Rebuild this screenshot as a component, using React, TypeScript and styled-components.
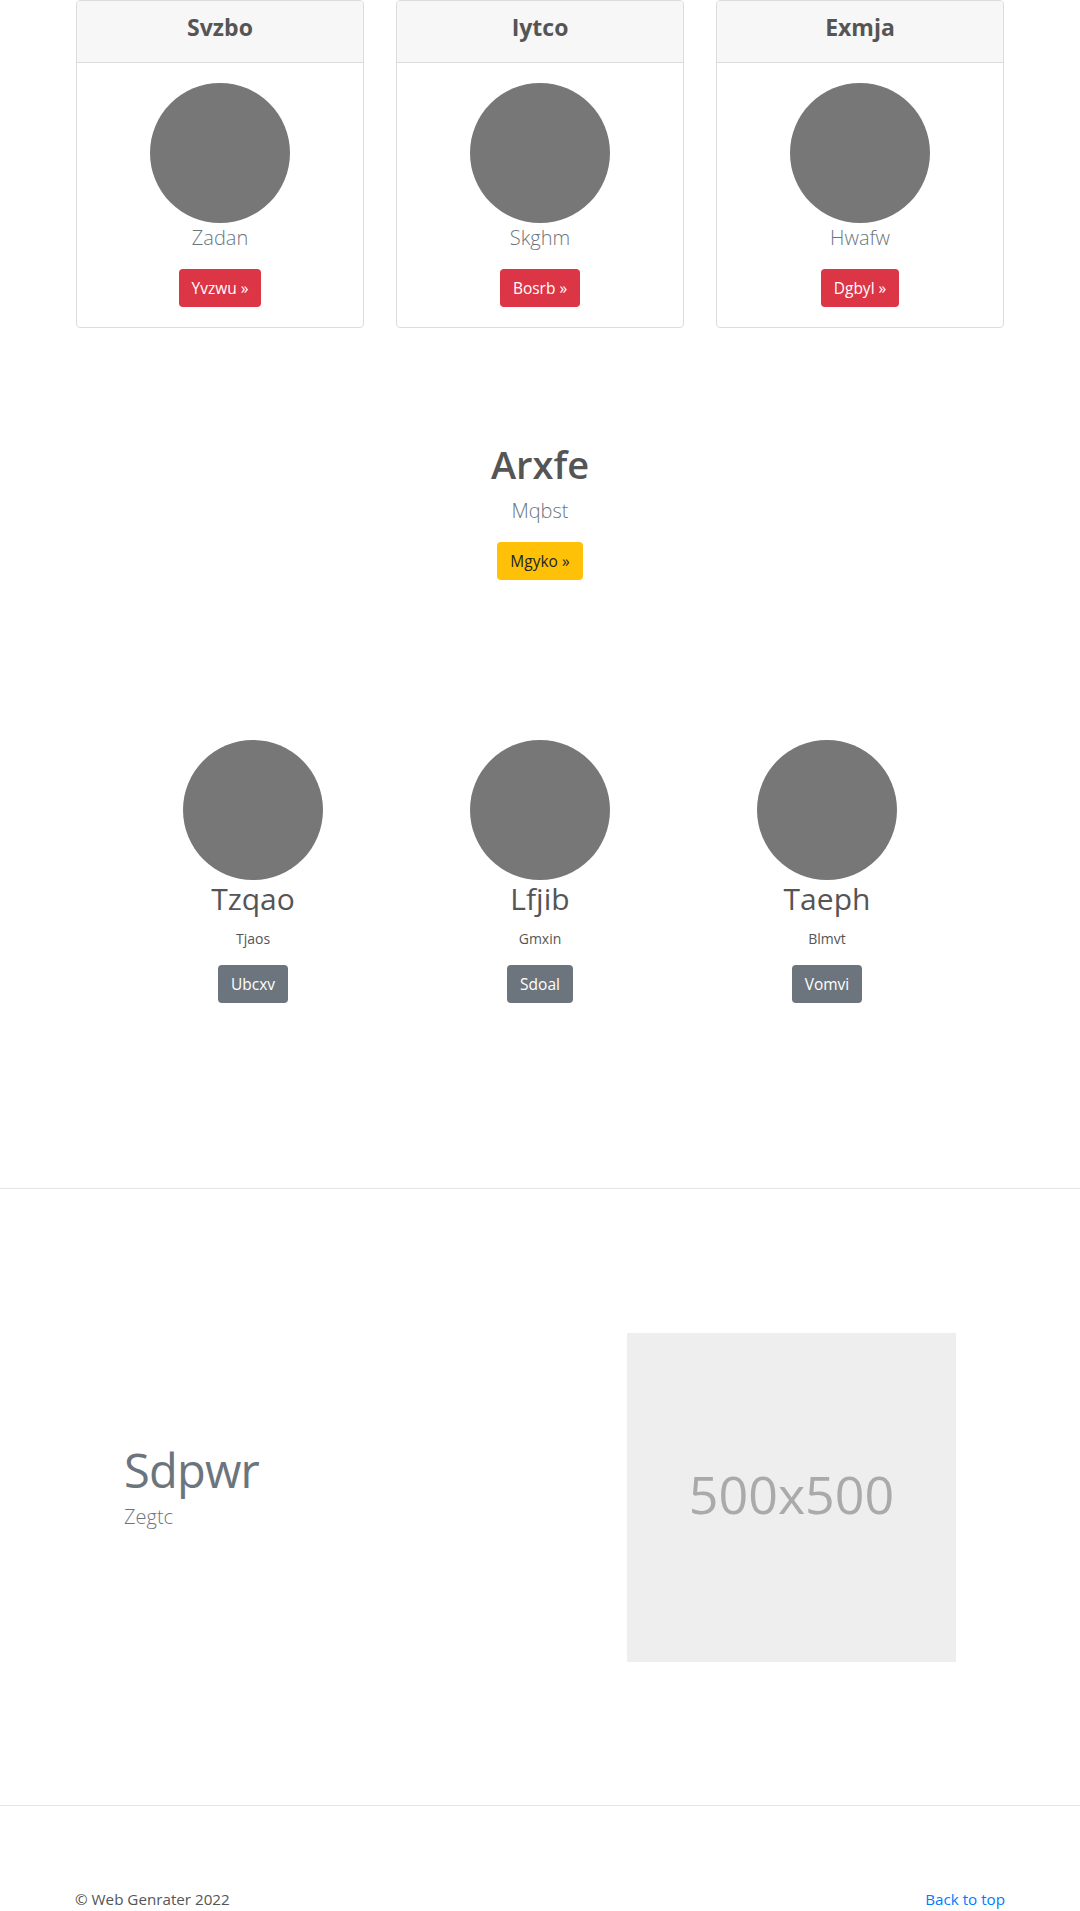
import React from 'react';
import styled, { createGlobalStyle } from 'styled-components';

const GlobalStyle = createGlobalStyle`
    * {
        box-sizing: border-box;
    }

    body {
        margin: 0;
        background: #fff;
        color: #555;
        font-family: 'Segoe UI', 'Open Sans', sans-serif;
        font-size: 16px;
        line-height: 1.5;
    }
`;

const CardRow = styled.div`
    width: 960px;
    margin: 0 auto;
    padding: 0 16px;
    display: grid;
    grid-template-columns: repeat(3, 1fr);
    gap: 32px;
`;

const Card = styled.div`
    border: 1px solid #dcdcdc;
    border-radius: 4px;
    display: flex;
    flex-direction: column;
    text-align: center;
    overflow: hidden;
`;

const CardHeader = styled.div`
    background: #f7f7f7;
    border-bottom: 1px solid #dcdcdc;
    padding: 12px 20px 20px;
    height: 62px;
`;

const CardTitle = styled.h4`
    margin: 0;
    font-size: 23px;
    line-height: 29px;
    font-weight: 700;
    color: #555;
`;

const CardBody = styled.div`
    padding: 20px;
    display: flex;
    flex-direction: column;
    align-items: center;
`;

const Circle = styled.div`
    width: 140px;
    height: 140px;
    border-radius: 50%;
    background: #777;
    flex-shrink: 0;
`;

const Lead = styled.p`
    margin: 0 0 16px;
    font-size: 20px;
    line-height: 30px;
    font-weight: 300;
    color: #6c757d;
`;

const Button = styled.a<{ $variant: 'danger' | 'warning' | 'secondary' }>`
    display: inline-block;
    padding: 6px 12px;
    border: 1px solid transparent;
    border-radius: 4px;
    font-size: 15.5px;
    line-height: 24px;
    text-decoration: none;
    cursor: pointer;
    color: ${(p) => (p.$variant === 'warning' ? '#212529' : '#fff')};
    background: ${(p) =>
        p.$variant === 'danger'
            ? '#dc3545'
            : p.$variant === 'warning'
            ? '#ffc107'
            : '#6c757d'};
`;

const Hero = styled.section`
    padding-top: 112px;
    text-align: center;
`;

const HeroTitle = styled.h1`
    margin: 0 0 8px;
    font-size: 38px;
    line-height: 48px;
    font-weight: 600;
    color: #555;
`;

const Marketing = styled.div`
    width: 861px;
    margin: 160px auto 0;
    display: grid;
    grid-template-columns: repeat(3, 1fr);
`;

const MarketingCol = styled.div`
    display: flex;
    flex-direction: column;
    align-items: center;
    text-align: center;
`;

const MarketingName = styled.h2`
    margin: 0 0 10px;
    font-size: 30px;
    line-height: 38px;
    font-weight: 400;
    color: #555;
`;

const MarketingText = styled.p`
    margin: 0 0 16px;
    font-size: 14px;
    line-height: 21px;
    color: #555;
`;

const Divider = styled.hr<{ $top: number }>`
    margin: ${(p) => p.$top}px 0 0;
    border: 0;
    border-top: 1px solid #e5e5e5;
`;

const Featurette = styled.div`
    width: 832px;
    margin: 0 auto;
    padding: 144px 0 143px;
    display: grid;
    grid-template-columns: 1fr 329px;
    align-items: center;
`;

const FeaturetteHeading = styled.h2`
    margin: 0 0 8px;
    font-size: 47px;
    line-height: 1;
    font-weight: 400;
    letter-spacing: -0.8px;
    color: #6c757d;
`;

const Placeholder = styled.div`
    width: 329px;
    height: 329px;
    padding-bottom: 8px;
    background: #eee;
    color: #aaa;
    font-size: 52px;
    display: flex;
    align-items: center;
    justify-content: center;
`;

const Footer = styled.footer`
    width: 960px;
    margin: 0 auto;
    padding: 81px 15px 48px;
    display: flex;
    justify-content: space-between;
    font-size: 15.2px;
    line-height: 24px;
    color: #555;
`;

const TopLink = styled.a`
    color: #007bff;
    text-decoration: none;
`;

const cards = [
    { title: 'Svzbo', lead: 'Zadan', button: 'Yvzwu »' },
    { title: 'Iytco', lead: 'Skghm', button: 'Bosrb »' },
    { title: 'Exmja', lead: 'Hwafw', button: 'Dgbyl »' },
];

const people = [
    { name: 'Tzqao', text: 'Tjaos', button: 'Ubcxv' },
    { name: 'Lfjib', text: 'Gmxin', button: 'Sdoal' },
    { name: 'Taeph', text: 'Blmvt', button: 'Vomvi' },
];

const App: React.FC = () => {
    return (
        <main>
            <GlobalStyle />
            <CardRow>
                {cards.map((c) => (
                    <Card key={c.title}>
                        <CardHeader>
                            <CardTitle>{c.title}</CardTitle>
                        </CardHeader>
                        <CardBody>
                            <Circle />
                            <Lead>{c.lead}</Lead>
                            <Button $variant="danger">{c.button}</Button>
                        </CardBody>
                    </Card>
                ))}
            </CardRow>

            <Hero>
                <HeroTitle>Arxfe</HeroTitle>
                <Lead>Mqbst</Lead>
                <Button $variant="warning">Mgyko »</Button>
            </Hero>

            <Marketing>
                {people.map((p) => (
                    <MarketingCol key={p.name}>
                        <Circle />
                        <MarketingName>{p.name}</MarketingName>
                        <MarketingText>{p.text}</MarketingText>
                        <Button $variant="secondary">{p.button}</Button>
                    </MarketingCol>
                ))}
            </Marketing>

            <Divider $top={185} />

            <Featurette>
                <div>
                    <FeaturetteHeading>Sdpwr</FeaturetteHeading>
                    <Lead>Zegtc</Lead>
                </div>
                <Placeholder>500x500</Placeholder>
            </Featurette>

            <Divider $top={0} />

            <Footer>
                <span>© Web Genrater 2022</span>
                <TopLink href="#">Back to top</TopLink>
            </Footer>
        </main>
    );
};

export default App;
